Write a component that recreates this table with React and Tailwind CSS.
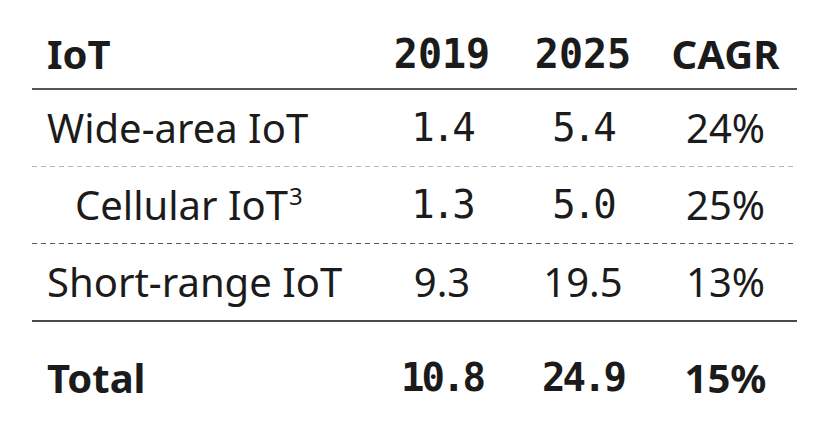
const sans = "font-['Noto_Sans',sans-serif]"
const mono = "font-['DejaVu_Sans_Mono',monospace] text-[39px] tracking-[-3px]"

const rows = [
  { label: "Wide-area IoT", indent: false, a: ["1.4", mono], b: ["5.4", mono], c: ["24%", sans], line: "light" },
  { label: "Cellular IoT", sup: "3", indent: true, a: ["1.3", mono], b: ["5.0", mono], c: ["25%", sans], line: "dark" },
  { label: "Short-range IoT", indent: false, a: ["9.3", sans], b: ["19.5", sans], c: ["13%", sans], line: "solid" },
]

function Divider({ kind }) {
  if (kind === "solid") return <div className="h-[2px] bg-[#4a4a4a]" />
  if (kind === "light")
    return <div className="h-px bg-[repeating-linear-gradient(90deg,#b8b8b8_0_5px,transparent_5px_9px)]" />
  return <div className="h-px bg-[repeating-linear-gradient(90deg,#555_0_5px,transparent_5px_9px)]" />
}

export default function App() {
  return (
    <div className="w-[832px] h-[448px] bg-white text-[#1b1b1b] pl-[32px] pr-[35px]">
      {/* header */}
      <div className="grid grid-cols-[340px_140px_142px_143px] h-[88px] items-end pb-[14px] text-[40px] leading-[40px] font-bold">
        <div className={`${sans} pl-[15px]`}>IoT</div>
        <div className="font-['DejaVu_Sans_Mono',monospace] text-center">2019</div>
        <div className="font-['DejaVu_Sans_Mono',monospace] text-center">2025</div>
        <div className={`${sans} text-center`}>CAGR</div>
      </div>
      <div className="h-[2px] bg-[#555]" />

      {rows.map((r, i) => (
        <div key={i}>
          <div className="grid grid-cols-[340px_140px_142px_143px] h-[76px] items-center text-[40px] leading-[40px]">
            <div className={`${sans} ${r.indent ? "pl-[43px]" : "pl-[15px]"}`}>
              {r.label}
              {r.sup && <span className="inline-block align-top text-[24px] leading-[24px] -mt-[1px] ml-[1px]">{r.sup}</span>}
            </div>
            <div className={`${r.a[1]} text-center`}>{r.a[0]}</div>
            <div className={`${r.b[1]} text-center`}>{r.b[0]}</div>
            <div className={`${r.c[1]} text-center`}>{r.c[0]}</div>
          </div>
          <Divider kind={r.line} />
        </div>
      ))}

      {/* total */}
      <div className="grid grid-cols-[340px_140px_142px_143px] h-[112px] items-center text-[40px] leading-[40px] font-bold">
        <div className={`${sans} pl-[15px]`}>Total</div>
        <div className={`${mono} text-center`}>10.8</div>
        <div className={`${mono} text-center`}>24.9</div>
        <div className={`${sans} text-center`}>15%</div>
      </div>
    </div>
  )
}
